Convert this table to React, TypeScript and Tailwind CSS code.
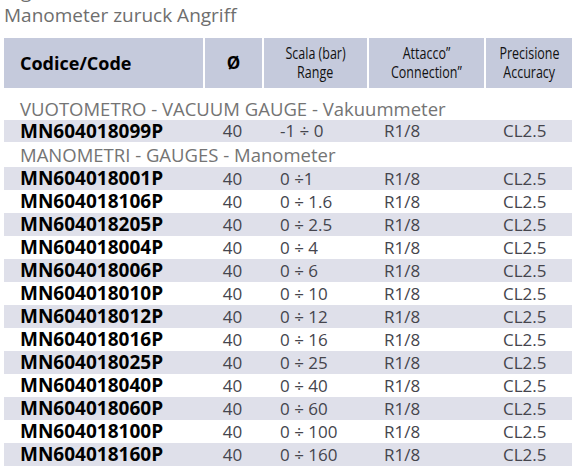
const codes = [
  ['MN604018001P', '0 ÷1'],
  ['MN604018106P', '0 ÷ 1.6'],
  ['MN604018205P', '0 ÷ 2.5'],
  ['MN604018004P', '0 ÷ 4'],
  ['MN604018006P', '0 ÷ 6'],
  ['MN604018010P', '0 ÷ 10'],
  ['MN604018012P', '0 ÷ 12'],
  ['MN604018016P', '0 ÷ 16'],
  ['MN604018025P', '0 ÷ 25'],
  ['MN604018040P', '0 ÷ 40'],
  ['MN604018060P', '0 ÷ 60'],
  ['MN604018100P', '0 ÷ 100'],
  ['MN604018160P', '0 ÷ 160'],
]

const cols = 'grid grid-cols-[199px_59px_105px_117px_1fr]'
const sans = { fontFamily: '"Open Sans", "DejaVu Sans", sans-serif' }

const Row = ({ code, range, striped, h }: { code: string; range: string; striped: boolean; h: string }) => (
  <div className={`${cols} ${h} items-center ${striped ? 'bg-[#dfe0ea]' : ''}`}>
    <div className="pl-4 text-[19px] font-bold text-black">{code}</div>
    <div className="text-center text-[17px] text-[#45454d]">40</div>
    <div className="pl-[18px] text-[17px] text-[#45454d]">{range}</div>
    <div className="pl-[17px] text-[17px] text-[#45454d]">R1/8</div>
    <div className="pl-[19px] text-[17px] text-[#45454d]">CL2.5</div>
  </div>
)

const HeadCell = ({ top, bottom }: { top: string; bottom: string }) => (
  <div className="flex flex-col items-center justify-center border-l-2 border-white text-[16px] font-medium leading-[19px] text-[#111]">
    <span className="scale-x-[0.78] whitespace-nowrap">{top}</span>
    <span className="scale-x-[0.78] whitespace-nowrap">{bottom}</span>
  </div>
)

export default function App() {
  return (
    <div className="w-[572px] h-[468px] overflow-hidden bg-white" style={sans}>
      <div className="h-[3px] overflow-hidden pl-1 text-[19px] text-[#6e6e6e]">
        <div className="-mt-[21px] leading-[24px]">Ingresso</div>
      </div>
      <div className="pl-1 text-[19px] leading-[24px] text-[#6e6e6e]">Manometer zuruck Angriff</div>
      <div className="ml-1 mt-[11px]">
        <div className={`${cols} h-[50px] bg-[#c5cadc] text-black`}>
          <div className="flex items-center pl-4 text-[18px] font-bold">Codice/Code</div>
          <div className="flex items-center justify-center border-l-2 border-white text-[17px] font-bold">Ø</div>
          <HeadCell top="Scala (bar)" bottom="Range" />
          <HeadCell top="Attacco”" bottom="Connection”" />
          <HeadCell top="Precisione" bottom="Accuracy" />
        </div>
        <div className="mt-[10px] flex h-[22px] items-center pl-4 text-[18.5px] leading-[22px] text-[#747474]">
          VUOTOMETRO - VACUUM GAUGE - Vakuummeter
        </div>
        <Row code="MN604018099P" range="-1 ÷ 0" striped h="h-[22px] leading-[22px]" />
        <div className="flex h-[25px] items-center pl-4 text-[18.5px] leading-[25px] text-[#747474]">
          MANOMETRI - GAUGES - Manometer
        </div>
        {codes.map(([code, range], i) => (
          <Row key={code} code={code} range={range} striped={i % 2 === 0} h="h-[23px] leading-[23px]" />
        ))}
      </div>
    </div>
  )
}
